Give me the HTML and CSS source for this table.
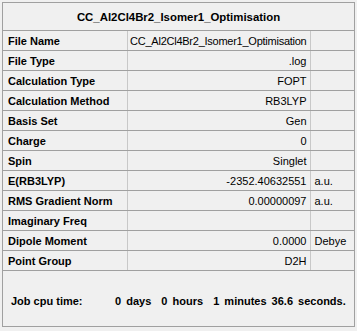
FILE: index.html
```html
<!DOCTYPE html>
<html>
<head>
<meta charset="utf-8">
<link rel="stylesheet" href="styles.css">
</head>
<body>
<div class="panel">
  <table class="props">
    <colgroup><col class="c-lbl"><col class="c-val"><col class="c-unit"></colgroup>
    <tr><th colspan="3" class="title">CC_Al2Cl4Br2_Isomer1_Optimisation</th></tr>
    <tr><td class="lbl">File Name</td><td class="val long">CC_Al2Cl4Br2_Isomer1_Optimisation</td><td class="unit"></td></tr>
    <tr><td class="lbl">File Type</td><td class="val">.log</td><td class="unit"></td></tr>
    <tr><td class="lbl">Calculation Type</td><td class="val">FOPT</td><td class="unit"></td></tr>
    <tr><td class="lbl">Calculation Method</td><td class="val">RB3LYP</td><td class="unit"></td></tr>
    <tr><td class="lbl">Basis Set</td><td class="val">Gen</td><td class="unit"></td></tr>
    <tr><td class="lbl">Charge</td><td class="val">0</td><td class="unit"></td></tr>
    <tr><td class="lbl">Spin</td><td class="val">Singlet</td><td class="unit"></td></tr>
    <tr><td class="lbl">E(RB3LYP)</td><td class="val">-2352.40632551</td><td class="unit">a.u.</td></tr>
    <tr><td class="lbl">RMS Gradient Norm</td><td class="val">0.00000097</td><td class="unit">a.u.</td></tr>
    <tr><td class="lbl">Imaginary Freq</td><td class="val"></td><td class="unit"></td></tr>
    <tr><td class="lbl">Dipole Moment</td><td class="val">0.0000</td><td class="unit">Debye</td></tr>
    <tr><td class="lbl">Point Group</td><td class="val">D2H</td><td class="unit"></td></tr>
  </table>
  <div class="cpu">
    <span class="cpu-label">Job cpu time:</span>
    <span class="cpu-val">0 days&nbsp; 0 hours&nbsp; 1 minutes 36.6 seconds.</span>
  </div>
</div>
</body>
</html>
```
FILE: styles.css
```css
html, body {
  margin: 0;
  padding: 0;
  background: #f0f0f0;
}
body {
  font-family: "Liberation Sans", Arial, sans-serif;
  font-size: 11px;
  color: #000;
}
.panel {
  width: 351px;
  margin: 2px 0 0 2px;
  border: 1px solid #a0a0a0;
  border-bottom: none;
}
.props {
  border-collapse: collapse;
  width: 351px;
  table-layout: fixed;
}
.c-lbl { width: 124px; }
.c-val { width: 183px; }
.c-unit { width: 44px; }
.props td, .props th {
  height: 19px;
  padding: 0;
  border-bottom: 1px solid #a0a0a0;
  white-space: nowrap;
  overflow: hidden;
}
.props th.title {
  height: 27px;
  font-weight: bold;
  font-size: 11.4px;
  text-align: center;
}
.lbl {
  padding-left: 5px !important;
  font-weight: bold;
  border-right: 1px solid #c8c8c8;
}
.val {
  text-align: right;
  padding-right: 3px !important;
  border-right: 1px solid #c8c8c8;
}
.long {
  letter-spacing: -0.25px;
}
.unit {
  padding-left: 4px !important;
}
.cpu {
  height: 56px;
  border-bottom: 1px solid #a0a0a0;
  box-shadow: 0 2px 0 -1px #707070;
  display: flex;
  align-items: center;
  font-weight: bold;
  padding-left: 8px;
  padding-top: 5px;
  box-sizing: border-box;
}
.cpu-label {
  width: 104px;
}
.cpu-val {
  word-spacing: 2px;
}
```
